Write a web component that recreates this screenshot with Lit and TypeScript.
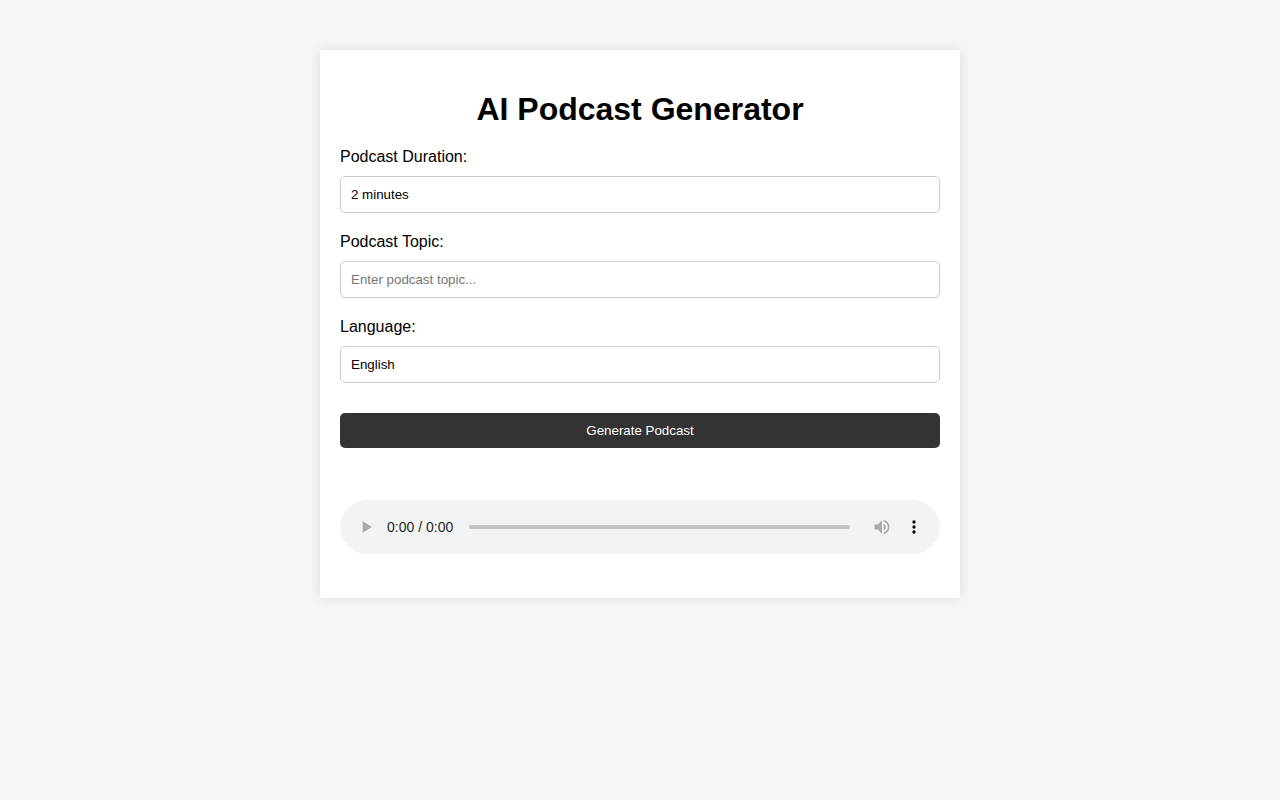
import { LitElement, html, css } from "lit";
import { customElement } from "lit/decorators.js";

@customElement("app-root")
export class AppRoot extends LitElement {
  static styles = css`
    :host {
      display: block;
      min-height: 800px;
      box-sizing: border-box;
      padding-top: 50px;
      background: #f5f5f5;
      font-family: "Liberation Sans", Arial, sans-serif;
      color: #000;
    }
    .card {
      box-sizing: border-box;
      width: 640px;
      margin: 0 auto;
      padding: 20px 20px 44px;
      background: #fff;
      box-shadow: 0 0 10px rgba(0, 0, 0, 0.1);
    }
    h1 {
      margin: 21.44px 0 20px;
      font-size: 32px;
      font-weight: 700;
      text-align: center;
    }
    .group {
      margin-bottom: 20px;
    }
    label {
      display: block;
      margin-bottom: 10px;
      font-size: 16px;
    }
    input,
    select {
      display: block;
      box-sizing: border-box;
      width: 100%;
      height: 37px;
      padding: 10px;
      border: 1px solid #ccc;
      border-radius: 5px;
      background: #fff;
      color: #000;
      font: 13.3333px "Liberation Sans", Arial, sans-serif;
      outline: none;
      appearance: none;
    }
    input::placeholder {
      color: #757575;
    }
    button {
      display: block;
      width: 100%;
      height: 35px;
      margin-top: 30px;
      padding: 10px;
      border: none;
      border-radius: 5px;
      background: #333;
      color: #fff;
      font: 13.3333px "Liberation Sans", Arial, sans-serif;
      cursor: pointer;
    }
    audio {
      display: block;
      width: 100%;
      height: 54px;
      margin-top: 52px;
    }
    audio::-webkit-media-controls-current-time-display,
    audio::-webkit-media-controls-time-remaining-display {
      font-family: "Liberation Sans", Arial, sans-serif;
    }
  `;

  render() {
    return html`
      <div class="card">
        <h1>AI Podcast Generator</h1>
        <div class="group">
          <label for="duration">Podcast Duration:</label>
          <select id="duration">
            <option>2 minutes</option>
            <option>5 minutes</option>
            <option>10 minutes</option>
          </select>
        </div>
        <div class="group">
          <label for="topic">Podcast Topic:</label>
          <input id="topic" type="text" placeholder="Enter podcast topic..." />
        </div>
        <div class="group">
          <label for="language">Language:</label>
          <select id="language">
            <option>English</option>
            <option>Spanish</option>
            <option>French</option>
          </select>
        </div>
        <button type="button">Generate Podcast</button>
        <audio controls></audio>
      </div>
    `;
  }
}
